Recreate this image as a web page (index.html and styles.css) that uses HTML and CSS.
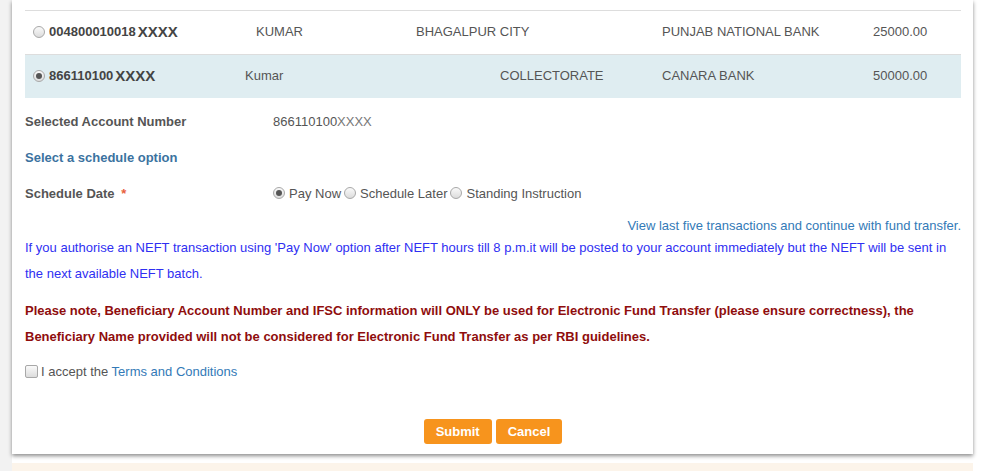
FILE: index.html
```html
<!DOCTYPE html>
<html lang="en">
<head>
  <meta name="viewport" content="width=device-width, initial-scale=1.0">
  <title>Fund Transfer</title>
  <link rel="stylesheet" href="styles.css">
</head>
<body>
  <div class="page">
    <div class="side-strip"></div>
    <div class="main">
      <div class="panel">

        <!-- Beneficiary list -->
        <div class="bene-list">
          <div class="bene-row bene-row-a">
            <div class="cell acct"><span class="radio"></span><b>004800010018</b><span class="mask">XXXX</span></div>
            <div class="cell">KUMAR</div>
            <div class="cell">BHAGALPUR CITY</div>
            <div class="cell">PUNJAB NATIONAL BANK</div>
            <div class="cell">25000.00</div>
          </div>
          <div class="bene-row bene-row-b selected">
            <div class="cell acct"><span class="radio checked"></span><b>866110100</b><span class="mask">XXXX</span></div>
            <div class="cell">Kumar</div>
            <div class="cell">COLLECTORATE</div>
            <div class="cell">CANARA BANK</div>
            <div class="cell">50000.00</div>
          </div>
        </div>

        <div class="field-row first">
          <div class="label">Selected Account Number</div>
          <div class="value">866110100<span class="mask-light">XXXX</span></div>
        </div>

        <div class="field-row">
          <div class="section-title">Select a schedule option</div>
        </div>

        <div class="field-row">
          <div class="label">Schedule Date <span class="req">*</span></div>
          <div class="value options">
            <label><span class="radio checked"></span>Pay Now</label>
            <label><span class="radio"></span>Schedule Later</label>
            <label><span class="radio"></span>Standing Instruction</label>
          </div>
        </div>

        <div class="view-link"><a href="#">View last five transactions and continue with fund transfer.</a></div>

        <p class="note-blue">If you authorise an NEFT transaction using 'Pay Now' option after NEFT hours till 8 p.m.it will be posted to your account immediately but the NEFT will be sent in the next available NEFT batch.</p>

        <p class="note-red">Please note, Beneficiary Account Number and IFSC information will ONLY be used for Electronic Fund Transfer (please ensure correctness), the Beneficiary Name provided will not be considered for Electronic Fund Transfer as per RBI guidelines.</p>

        <div class="accept">
          <span class="checkbox"></span>I accept the <a href="#">Terms and Conditions</a>
        </div>

        <div class="actions">
          <button class="btn">Submit</button>
          <button class="btn">Cancel</button>
        </div>
      </div>

      <div class="next-panel"></div>
    </div>
  </div>
</body>
</html>
```

FILE: styles.css
```css
body {
  margin: 0;
  background: #fff;
  font-family: "Liberation Sans", Arial, sans-serif;
  font-size: 13px;
  color: #555;
}

.page {
  display: flex;
  height: 471px;
  overflow: hidden;
}

.side-strip {
  width: 12px;
  background: #f2f2f2;
  flex-shrink: 0;
}

.main {
  width: 961px;
  display: flex;
  flex-direction: column;
}

.panel {
  background: #fff;
  padding: 10px 12px 10px 13px;
  box-shadow: 0 2px 4px rgba(0, 0, 0, 0.45);
}

.next-panel {
  margin-top: 9px;
  flex: 1;
  background: #fcf4ea;
}

/* beneficiary rows */
.bene-row {
  display: grid;
  height: 41px;
  padding-bottom: 2px;
  align-items: center;
  border-top: 1px solid #ddd;
  padding-left: 8px;
}

.bene-row-a {
  grid-template-columns: 223px 160px 246px 211px 1fr;
}

.bene-row-b {
  grid-template-columns: 212px 255px 162px 211px 1fr;
}

.bene-row.selected {
  background: #dfedf1;
}

.cell {
  white-space: nowrap;
}

.acct {
  display: flex;
  align-items: center;
}

.acct b {
  color: #444;
}

.mask {
  font-weight: bold;
  font-size: 15px;
  color: #444;
  margin-left: 2px;
}

.mask-light {
  color: #777;
}

.radio {
  display: inline-block;
  width: 10px;
  height: 10px;
  border: 1px solid #a8a8a8;
  border-radius: 50%;
  background: linear-gradient(#fafafa, #dcdcdc);
  margin-right: 4px;
  position: relative;
  flex-shrink: 0;
}

.radio.checked::after {
  content: "";
  position: absolute;
  left: 2px;
  top: 2px;
  width: 6px;
  height: 6px;
  border-radius: 50%;
  background: #555;
}

.checkbox {
  display: inline-block;
  width: 11px;
  height: 11px;
  border: 1px solid #a8a8a8;
  border-radius: 2px;
  background: linear-gradient(#fafafa, #dcdcdc);
  margin-right: 3px;
  vertical-align: -2px;
}

/* form fields */
.field-row {
  display: flex;
  align-items: center;
  height: 36px;
}

.field-row.first {
  margin-top: 5px;
}

.label {
  width: 248px;
  font-weight: bold;
}

.req {
  color: #e8603c;
  margin-left: 3px;
}

.section-title {
  font-weight: bold;
  color: #3b72a0;
}

.options {
  display: flex;
  align-items: center;
}

.options label {
  display: flex;
  align-items: center;
  margin-right: 3px;
}

.view-link {
  margin-top: 6px;
  text-align: right;
  line-height: 18px;
}

a {
  color: #337ab7;
  text-decoration: none;
}

.note-blue {
  margin: 0;
  line-height: 26px;
  color: #2f2ff2;
}

.note-red {
  margin: 11px 0 0;
  line-height: 26px;
  font-weight: bold;
  color: #8f0d0d;
}

.accept {
  margin-top: 13px;
  line-height: 18px;
}

.actions {
  margin-top: 38px;
  display: flex;
  justify-content: center;
  gap: 4px;
}

.btn {
  height: 25px;
  padding: 0 12px;
  border: none;
  border-radius: 3px;
  background: #f7941d;
  color: #fff;
  font-family: "Liberation Sans", Arial, sans-serif;
  font-weight: bold;
  font-size: 13px;
  cursor: pointer;
}
```
